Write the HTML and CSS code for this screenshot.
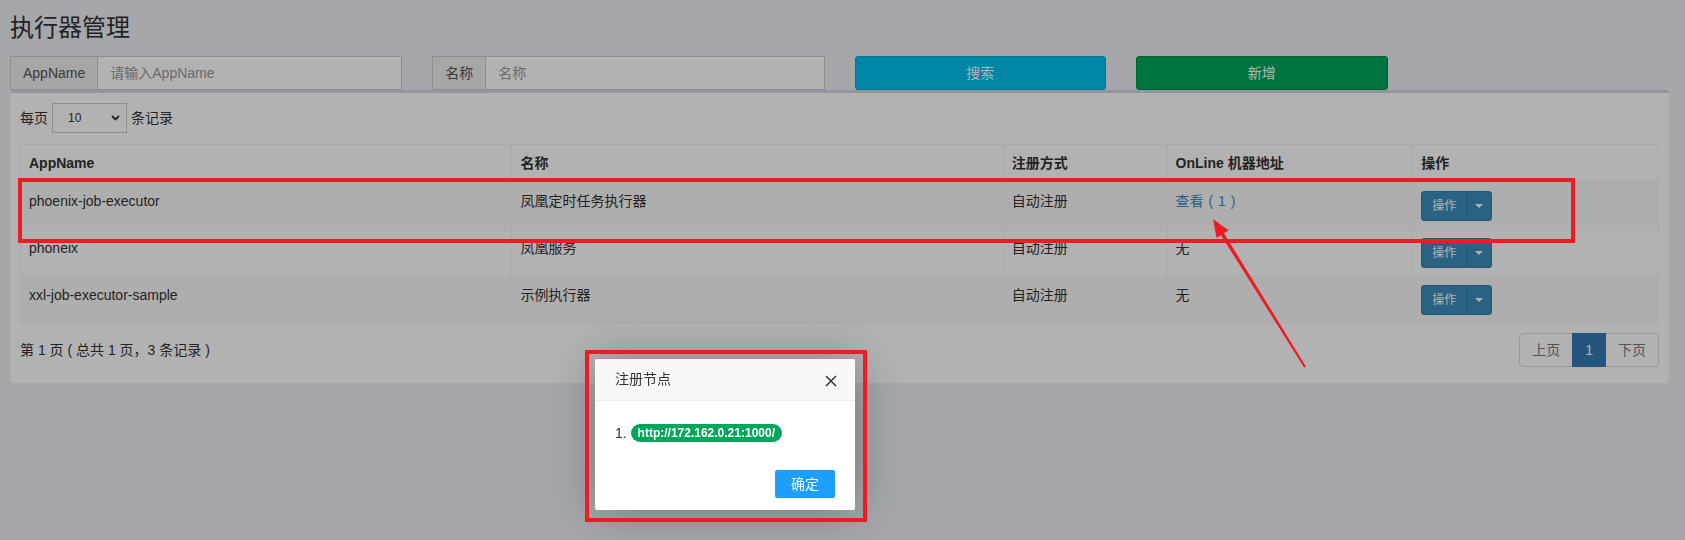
FILE: index.html
```html
<!DOCTYPE html>
<html lang="zh-CN">
<head>
<meta charset="utf-8">
<title>执行器管理</title>
<link rel="stylesheet" href="styles.css">
</head>
<body>
<div class="page">
  <h1 class="title">执行器管理</h1>
  <div class="search-row">
    <div class="col">
      <div class="input-group">
        <span class="addon">AppName</span>
        <input class="field" type="text" placeholder="请输入AppName">
      </div>
    </div>
    <div class="col">
      <div class="input-group">
        <span class="addon">名称</span>
        <input class="field" type="text" placeholder="名称">
      </div>
    </div>
    <div class="col"><a class="btn btn-block btn-info">搜索</a></div>
    <div class="col"><a class="btn btn-block btn-success">新增</a></div>
    <div class="col"></div>
  </div>

  <div class="box">
    <div class="length">
      <span>每页</span>
      <span class="select"><span>10</span>
        <svg class="chev" width="9" height="6" viewBox="0 0 9 6"><path d="M1 1l3.5 3.5L8 1" fill="none" stroke="#333" stroke-width="1.8"/></svg>
      </span>
      <span>条记录</span>
    </div>

    <table class="table">
      <colgroup>
        <col class="c30"><col class="c30"><col class="c10"><col class="c15"><col class="c15">
      </colgroup>
      <thead>
        <tr><th>AppName</th><th>名称</th><th>注册方式</th><th>OnLine 机器地址</th><th>操作</th></tr>
      </thead>
      <tbody>
        <tr>
          <td>phoenix-job-executor</td><td>凤凰定时任务执行器</td><td>自动注册</td>
          <td><a class="link">查看 ( 1 )</a></td>
          <td><div class="btn-group"><span class="btn-sm">操作</span><span class="btn-sm toggle"><span class="caret"></span></span></div></td>
        </tr>
        <tr>
          <td>phoneix</td><td>凤凰服务</td><td>自动注册</td><td>无</td>
          <td><div class="btn-group"><span class="btn-sm">操作</span><span class="btn-sm toggle"><span class="caret"></span></span></div></td>
        </tr>
        <tr>
          <td>xxl-job-executor-sample</td><td>示例执行器</td><td>自动注册</td><td>无</td>
          <td><div class="btn-group"><span class="btn-sm">操作</span><span class="btn-sm toggle"><span class="caret"></span></span></div></td>
        </tr>
      </tbody>
    </table>

    <div class="foot">
      <div class="info">第 1 页 ( 总共 1 页，3 条记录 )</div>
      <ul class="pagination">
        <li><a>上页</a></li>
        <li class="active"><a>1</a></li>
        <li><a>下页</a></li>
      </ul>
    </div>
  </div>
</div>

<div class="shade"></div>

<div class="layer">
  <div class="layer-title">注册节点
    <svg class="close" width="12" height="12" viewBox="0 0 12 12"><path d="M1 1L11 11M11 1L1 11" stroke="#333" stroke-width="1.5"/></svg>
  </div>
  <div class="layer-content">1. <span class="badge">http://172.162.0.21:1000/</span></div>
  <div class="layer-btns"><a class="layer-btn">确定</a></div>
</div>

<svg class="annot" width="1685" height="540" viewBox="0 0 1685 540">
  <rect x="20" y="180" width="1553" height="61" fill="none" stroke="#ed1c24" stroke-width="4"/>
  <rect x="587" y="352" width="278" height="168" fill="none" stroke="#ed1c24" stroke-width="4"/>
  <polygon fill="#ed1c24" points="1213,219 1228.5,230.6 1224,233.3 1305.9,366.5 1304.1,367.5 1221,235.3 1216.5,238"/>
</svg>
</body>
</html>
```

FILE: styles.css
```css
* { box-sizing: border-box; }

body {
  margin: 0;
  background: #ecf0f5;
  font-family: "Liberation Sans", "Noto Sans CJK SC", sans-serif;
  font-size: 14px;
  line-height: 20px;
  color: #333;
  overflow: hidden;
}

.page {
  width: 1669px;
  padding-left: 10px;
}

.title {
  margin: 0 0 15px;
  padding-top: 15px;
  font-size: 24px;
  line-height: 26px;
  font-weight: normal;
  color: #333;
}

.search-row {
  display: grid;
  grid-template-columns: 3fr 3fr 2fr 2fr 2fr;
  margin: 0 -15px;
}

.col { padding: 0 15px; }

.input-group {
  display: flex;
  height: 34px;
}

.addon {
  padding: 6px 12px;
  border: 1px solid #ccc;
  border-right: 0;
  background: #eee;
  color: #555;
  line-height: 20px;
  white-space: nowrap;
}

.field {
  flex: 1;
  min-width: 0;
  height: 34px;
  padding: 6px 12px;
  border: 1px solid #ccc;
  border-radius: 0;
  font: inherit;
  color: #555;
  background: #fff;
  outline: none;
}

.field::placeholder { color: #999; }

.btn {
  display: block;
  height: 34px;
  padding: 6px 12px;
  border: 1px solid transparent;
  border-radius: 3px;
  color: #fff;
  text-align: center;
  line-height: 20px;
}

.btn-info { background: #00c0ef; border-color: #00acd6; }
.btn-success { background: #00a65a; border-color: #008d4c; }

.box {
  background: #fff;
  border-top: 3px solid #d2d6de;
  border-radius: 3px;
  box-shadow: 0 1px 1px rgba(0, 0, 0, .1);
  padding: 10px;
}

.length {
  display: flex;
  align-items: center;
  gap: 4px;
  height: 30px;
}

.select {
  width: 75px;
  height: 30px;
  border: 1px solid #ccc;
  display: flex;
  align-items: center;
  justify-content: space-between;
  padding: 0 6px 0 15px;
  font-size: 12px;
}

.chev { display: block; }

.table {
  width: 100%;
  margin-top: 11px;
  border-collapse: collapse;
  border: 1px solid #f4f4f4;
}

.c30 { width: 30%; }
.c10 { width: 10%; }
.c15 { width: 15%; }

.table th,
.table td {
  padding: 8px;
  border: 1px solid #f4f4f4;
  text-align: left;
  vertical-align: top;
  line-height: 20px;
}

.table thead th {
  font-weight: bold;
  border-bottom-width: 2px;
}

.table tbody tr:nth-child(odd) { background: #f9f9f9; }

.link { color: #3c8dbc; word-spacing: 1px; }

.btn-group { display: inline-flex; vertical-align: top; }

.btn-sm {
  display: inline-block;
  height: 30px;
  padding: 5px 10px;
  font-size: 12px;
  line-height: 18px;
  color: #fff;
  background: #3c8dbc;
  border: 1px solid #367fa9;
  border-radius: 3px 0 0 3px;
}

.btn-sm.toggle {
  margin-left: -1px;
  padding: 5px 8px;
  border-radius: 0 3px 3px 0;
  display: inline-flex;
  align-items: center;
}

.caret {
  display: inline-block;
  width: 0;
  height: 0;
  border-top: 4px solid #fff;
  border-left: 4px solid transparent;
  border-right: 4px solid transparent;
}

.foot {
  display: flex;
  justify-content: space-between;
  align-items: flex-start;
  margin: 9px 0 6px;
}

.info { padding-top: 7px; }

.pagination {
  display: flex;
  list-style: none;
  margin: 0;
  padding: 0;
}

.pagination a {
  display: block;
  padding: 6px 12px;
  line-height: 20px;
  margin-left: -1px;
  border: 1px solid #ddd;
  background: #fff;
  color: #777;
}

.pagination li:first-child a { margin-left: 0; border-radius: 4px 0 0 4px; }
.pagination li:last-child a { border-radius: 0 4px 4px 0; }
.pagination .active a {
  background: #337ab7;
  border-color: #337ab7;
  color: #fff;
  position: relative;
}

.shade {
  position: fixed;
  inset: 0;
  background: rgba(0, 0, 0, .3);
}

.layer {
  position: fixed;
  left: 595px;
  top: 359px;
  width: 260px;
  background: #fff;
  border-radius: 2px;
  box-shadow: 1px 1px 50px rgba(0, 0, 0, .3);
}

.layer-title {
  position: relative;
  height: 42px;
  line-height: 41px;
  padding: 0 80px 0 20px;
  background: #f8f8f8;
  border-bottom: 1px solid #eee;
  border-radius: 2px 2px 0 0;
  color: #333;
  font-size: 14px;
}

.close {
  position: absolute;
  right: 18px;
  top: 16px;
}

.layer-content {
  padding: 20px;
  line-height: 24px;
  color: #333;
}

.badge {
  display: inline-block;
  padding: 3px 7px;
  font-size: 12px;
  font-weight: bold;
  line-height: 12px;
  color: #fff;
  background: #00a65a;
  border-radius: 9px;
  vertical-align: 1px;
}

.layer-btns {
  text-align: right;
  padding: 0 15px 12px;
}

.layer-btn {
  display: inline-block;
  height: 28px;
  line-height: 26px;
  margin: 5px 5px 0;
  padding: 0 15px;
  border: 1px solid #1e9fff;
  background: #1e9fff;
  color: #fff;
  border-radius: 2px;
  font-size: 14px;
}

.annot {
  position: absolute;
  left: 0;
  top: 0;
  pointer-events: none;
}
```
